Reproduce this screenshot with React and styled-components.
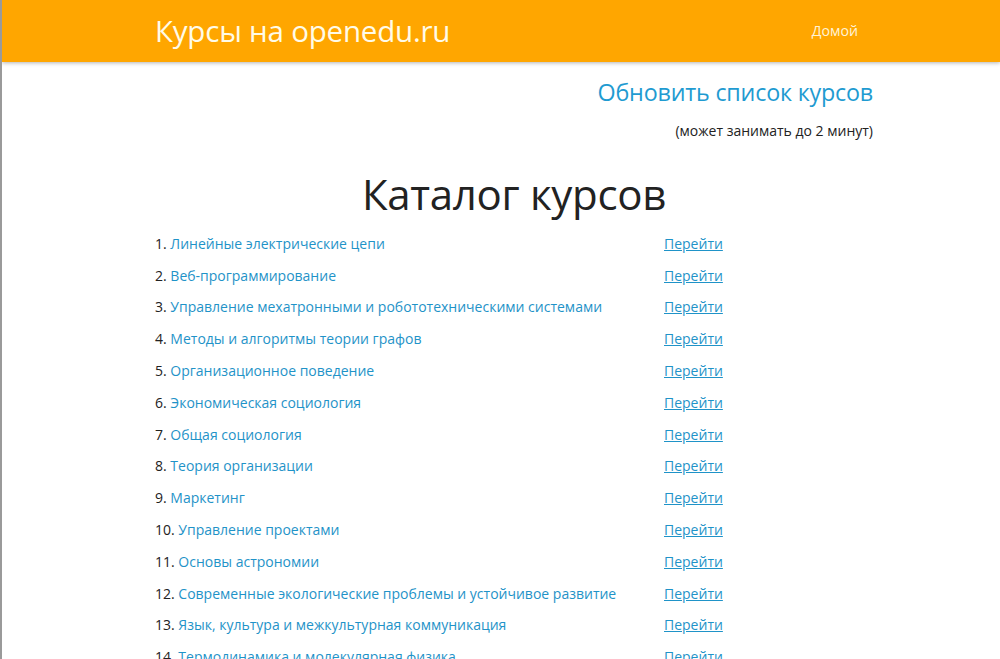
import React from "react";
import styled, { createGlobalStyle } from "styled-components";

const GlobalStyle = createGlobalStyle`
  html, body {
    margin: 0;
    padding: 0;
    background: #ffffff;
    font-family: "Open Sans", "Noto Sans", sans-serif;
    color: #222222;
  }
  body {
    border-left: 2px solid #9a9a9a;
    min-height: 659px;
    box-sizing: border-box;
  }
`;

const Navbar = styled.header`
  background-color: #ffa600;
  height: 62px;
  box-shadow: 0 1px 4px rgba(0, 0, 0, 0.3);
`;

const NavInner = styled.div`
  width: 718px;
  margin: 0 auto;
  padding-left: 26px;
  height: 100%;
  display: flex;
  align-items: center;
  justify-content: space-between;
`;

const Brand = styled.a`
  color: #fffbe8;
  font-size: 29.5px;
  text-decoration: none;
  letter-spacing: -0.2px;
  margin-top: -2px;
`;

const NavLink = styled.a`
  color: #fff3d6;
  font-size: 14.2px;
  text-decoration: none;
  margin-right: 15px;
  margin-top: -1px;
`;

const Container = styled.main`
  width: 718px;
  margin: 0 auto;
  padding-left: 26px;
`;

const RefreshBlock = styled.div`
  display: flex;
  flex-direction: column;
  align-items: flex-end;
  padding-top: 14px;
`;

const RefreshLink = styled.a`
  color: #1f9bd1;
  font-size: 23.3px;
  text-decoration: none;
  letter-spacing: -0.2px;
`;

const Note = styled.p`
  margin: 13px 0 0;
  font-size: 14px;
  color: #222;
`;

const Title = styled.h1`
  margin: 29px 0 8px;
  text-align: center;
  font-weight: 400;
  font-size: 42px;
  color: #222;
  letter-spacing: -0.3px;
  line-height: 1.2;
`;

const CourseList = styled.div`
  display: flex;
  flex-direction: column;
`;

const Row = styled.div`
  display: grid;
  grid-template-columns: 509px 1fr;
  height: 31.8px;
  align-items: center;
  font-size: 14px;
`;

const CourseName = styled.span`
  color: #222;
`;

const CourseLink = styled.a`
  color: #1f93c8;
  text-decoration: none;
`;

const GoLink = styled.a`
  color: #1f93c8;
  text-decoration: underline;
`;

const courses = [
  "Линейные электрические цепи",
  "Веб-программирование",
  "Управление мехатронными и робототехническими системами",
  "Методы и алгоритмы теории графов",
  "Организационное поведение",
  "Экономическая социология",
  "Общая социология",
  "Теория организации",
  "Маркетинг",
  "Управление проектами",
  "Основы астрономии",
  "Современные экологические проблемы и устойчивое развитие",
  "Язык, культура и межкультурная коммуникация",
  "Термодинамика и молекулярная физика",
];

export default function App() {
  return (
    <>
      <GlobalStyle />
      <Navbar>
        <NavInner>
          <Brand href="#">Курсы на openedu.ru</Brand>
          <NavLink href="#">Домой</NavLink>
        </NavInner>
      </Navbar>
      <Container>
        <RefreshBlock>
          <RefreshLink href="#">Обновить список курсов</RefreshLink>
          <Note>(может занимать до 2 минут)</Note>
        </RefreshBlock>
        <Title>Каталог курсов</Title>
        <CourseList>
          {courses.map((name, i) => (
            <Row key={name}>
              <CourseName>
                {i + 1}. <CourseLink href="#">{name}</CourseLink>
              </CourseName>
              <div>
                <GoLink href="#">Перейти</GoLink>
              </div>
            </Row>
          ))}
        </CourseList>
      </Container>
    </>
  );
}
